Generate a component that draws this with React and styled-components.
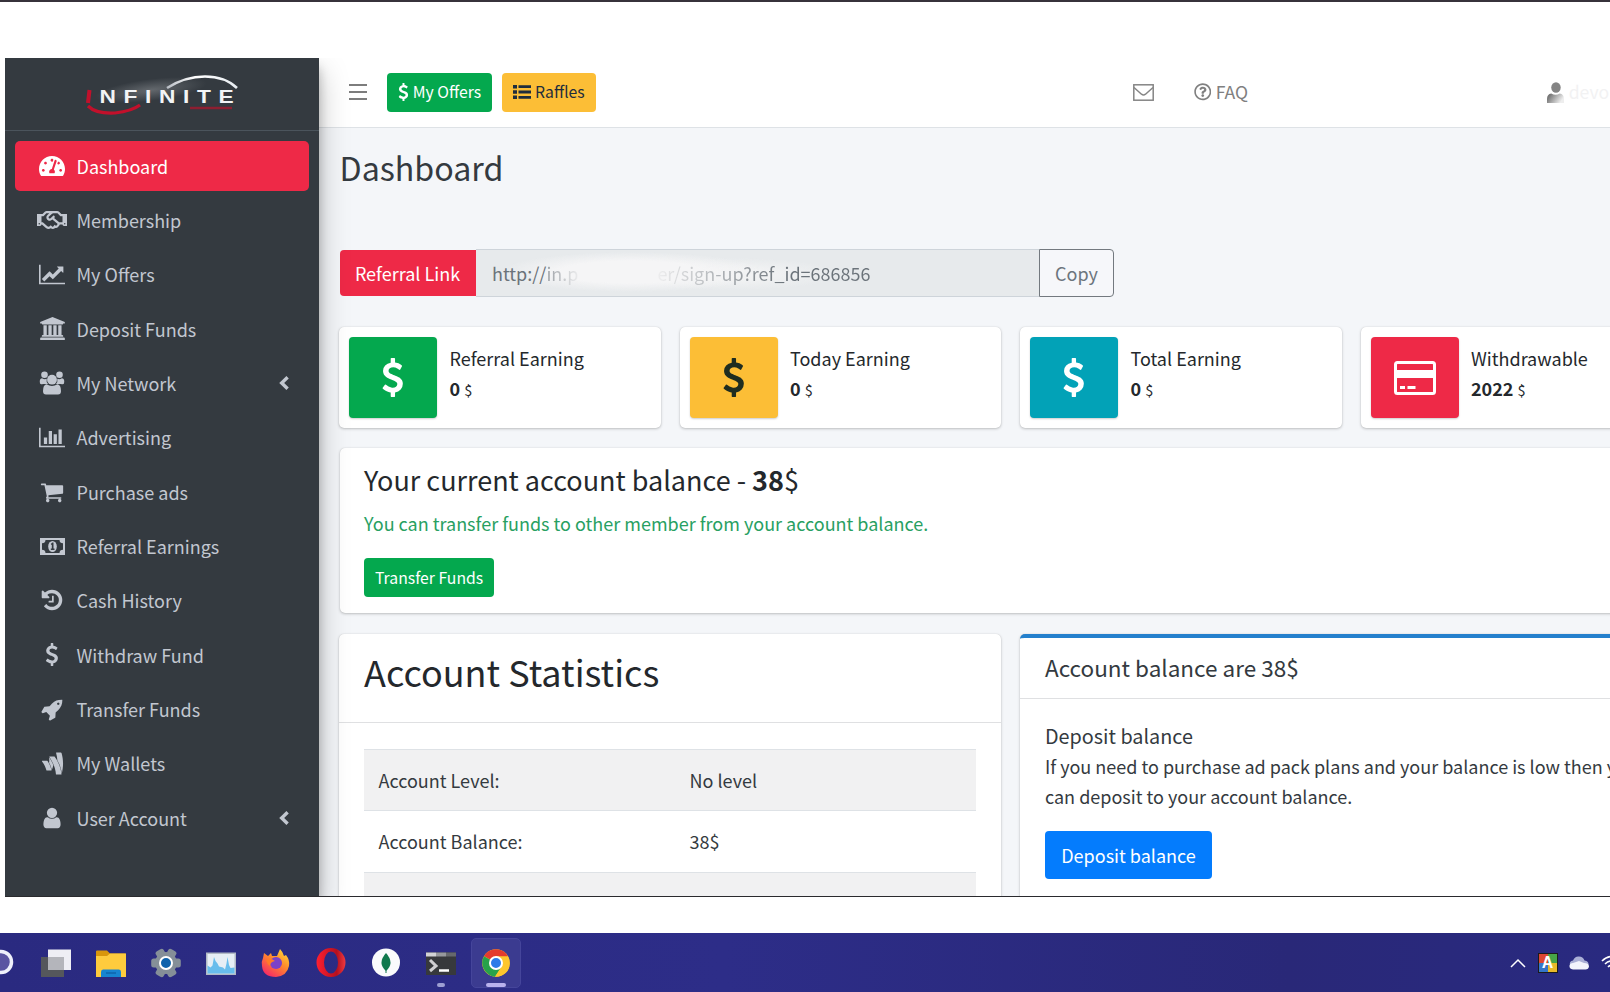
import React from "react";
import styled, { createGlobalStyle } from "styled-components";
import { FaRegHandshake, FaGoogleWallet, FaTachometerAlt, FaRegQuestionCircle } from "react-icons/fa";

const Global = createGlobalStyle`
  * { box-sizing: border-box; }
  html, body { margin: 0; padding: 0; }
  body {
    width: 1610px; height: 992px; overflow: hidden; background: #fff;
    font-family: "Noto Sans CJK SC", "Open Sans", sans-serif;
    font-size: 18px; line-height: 30px; color: #24282c;
  }
  h1, h2, h3, p { margin: 0; font-weight: 400; }
  button { font-family: inherit; margin: 0; }
  svg { display: block; flex: none; }
`;

const Screen = styled.div`
  display: flex; flex-direction: column; width: 1610px; height: 992px;
  border-top: 2px solid #37323b; overflow: hidden;
`;
const Browser = styled.div`
  display: flex; height: 839px; margin: 56px 0 0 5px; flex: none;
  border-bottom: 1.5px solid #2a2a2e; overflow: hidden;
`;

/* Sidebar */
const Sidebar = styled.aside`
  width: 314px; flex: none; background: #343a40; position: relative; z-index: 2;
  box-shadow: 0 14px 28px rgba(0,0,0,.25), 0 10px 10px rgba(0,0,0,.22);
`;
const Brand = styled.div`
  height: 72.5px; border-bottom: 1px solid #4b545c; display: flex; padding: 7px 0 0 70px;
`;
const Nav = styled.nav`
  display: flex; flex-direction: column; gap: 4.05px; padding: 10px;
`;
const NavItem = styled.a`
  display: flex; align-items: center; height: 50.3px; padding: 0 20px; border-radius: 5px;
  color: ${(p) => (p.$active ? "#fff" : "#c2c7d0")};
  background: ${(p) => (p.$active ? "#ee2947" : "transparent")};
`;
const NavIcon = styled.span`
  width: 34px; display: flex; justify-content: center; margin-right: 7.5px;
`;
const NavLabel = styled.span`flex: 1;`;

/* Main */
const Main = styled.div`
  flex: 1; min-width: 0; background: #f4f6f9; display: flex; flex-direction: column;
`;
const Topbar = styled.header`
  height: 70px; flex: none; background: #fff; border-bottom: 1px solid #dee2e6;
  display: flex; align-items: center; padding-left: 30px; padding-bottom: 1px; white-space: nowrap;
`;
const Burger = styled.span`
  width: 18px; height: 17px; margin-right: 20px; display: flex; flex-direction: column; justify-content: space-between;
  i { height: 2.4px; background: #7d7d7d; }
`;
const SmallButton = styled.button`
  display: flex; align-items: center; height: 39px; padding: 0 11px; gap: ${(p) => p.$gap || 0}px;
  border: 0; border-radius: 4px; font-size: 15.75px; line-height: 24px; white-space: nowrap;
  color: ${(p) => (p.$warning ? "#1f2d3d" : "#fff")};
  background: ${(p) => (p.$warning ? "#fcbe36" : "#04a84e")};
  & + & { margin-left: 10px; }
`;
const TopLink = styled.span`
  display: flex; align-items: center; gap: 4.5px; color: #808080; font-size: 17.6px;
  margin-left: ${(p) => p.$left}px;
`;
const FadedName = styled.span`color: #f2f2f3;`;
const Content = styled.main`padding: 19px 0 0 20.5px;`;
const PageTitle = styled.h1`
  font-size: 32.2px; line-height: 40px; color: #343a40; margin-bottom: 62px;
`;

const ReferralRow = styled.div`
  display: flex; height: 48px; width: 774.5px; margin-bottom: 30px;
`;
const ReferralTag = styled.div`
  width: 136px; margin: 1px 0; background: #ee2947; color: #fff; border-radius: 4px 0 0 4px;
  display: flex; align-items: center; justify-content: center; padding-bottom: 1px;
`;
const ReferralField = styled.div`
  flex: 1; display: flex; align-items: center; padding: 0 0 1px 16.5px; color: #6b737a;
  border: 1px solid #ced4da; border-width: 1px 0;
  background:
    radial-gradient(ellipse 130px 20px at 155px 22px, #f5f5f6 0 55%, transparent 100%),
    radial-gradient(ellipse 110px 16px at 255px 24px, #f1f2f3 0 35%, transparent 100%),
    #e7eaec;
`;
const Ghost = styled.span`
  width: ${(p) => p.$width}px; white-space: nowrap; color: transparent;
  background: linear-gradient(90deg, ${(p) => p.$from}, ${(p) => p.$to});
  background-clip: text; -webkit-background-clip: text;
`;
const CopyButton = styled.button`
  width: 75px; border: 1.5px solid #73797f; border-radius: 0 4px 4px 0; background: #f6f7fa;
  color: #6c757d; font-size: 18px; line-height: 30px; padding: 0 0 1px;
`;

const Cards = styled.div`
  display: grid; grid-template-columns: repeat(4, 321.5px); column-gap: 19px; margin: 0 0 20px -0.5px;
`;
const Card = styled.section`
  background: #fff; border-radius: 5px;
  box-shadow: 0 0 1px rgba(0,0,0,.16), 0 1px 3px rgba(0,0,0,.22);
`;
const InfoCard = styled(Card)`
  height: 101px; padding: 10px; display: flex; gap: 12.5px;
`;
const InfoIcon = styled.div`
  width: 88px; height: 81px; border-radius: 4px; background: ${(p) => p.$bg}; color: ${(p) => p.$fg || "#fff"};
  display: flex; align-items: center; justify-content: center; box-shadow: 0 1px 2px rgba(0,0,0,.2);
`;
const InfoText = styled.div`
  display: flex; flex-direction: column; padding-top: 6px; line-height: 30px;
  small { font-size: 14.5px; }
`;

const BalanceCard = styled(Card)`
  width: 1344px; height: 165px; padding: 15.5px 24.5px; margin-bottom: 20.5px;
`;
const BalanceTitle = styled.h2`font-size: 27px; line-height: 32px; margin-bottom: 12.5px;`;
const BalanceNote = styled.p`color: #28a062; margin-bottom: 20px;`;

const Columns = styled.div`
  display: grid; grid-template-columns: 662px 662px; column-gap: 19px; margin-left: -0.5px;
`;
const Panel = styled(Card)`
  height: 320px; border-top: ${(p) => (p.$accent ? "4px solid #2480cd" : "0")};
`;
const PanelHead = styled.div`
  height: ${(p) => p.$height}px; padding: ${(p) => p.$top}px 25px 0; border-bottom: 1px solid #dfe0e2;
`;
const StatsTitle = styled.h1`font-size: 36px; line-height: 44px;`;
const DepositHead = styled.h3`font-size: 22.5px; line-height: 28px; color: #343a40;`;
const PanelBody = styled.div`padding: ${(p) => p.$top || 25.5}px 25px 0; color: #343a40;`;
const StatRow = styled.div`
  display: grid; grid-template-columns: 303px 1fr; align-items: center; height: 61.6px; padding: 0 14.5px;
  border-top: 1px solid #dee2e6; background: ${(p) => (p.$striped ? "#f1f1f2" : "#fff")};
  span + span { padding-left: 8px; }
`;
const DepositTitle = styled.h3`font-size: 19.8px; line-height: 24px; margin-bottom: 2.5px;`;
const DepositText = styled.p`width: 592px; white-space: nowrap; margin-bottom: 20.5px;`;
const DepositButton = styled.button`
  height: 47.5px; width: 167px; border: 0; border-radius: 4px; background: #047cfd; color: #fff;
  font-size: 18px; line-height: 30px; padding: 0;
`;

/* Taskbar */
const Taskbar = styled.footer`
  margin-top: auto; height: 59px; flex: none; display: flex; align-items: stretch; overflow: hidden;
  background: linear-gradient(90deg, #2a2a80, #2d2d88 45%, #292878 80%, #292a80);
`;
const AppSlot = styled.div`
  width: 55.1px; flex: none; display: flex; flex-direction: column; align-items: center; position: relative;
  padding-top: 14.500px;
  &:first-child { margin-left: -27px; }
`;
const ActiveSlot = styled(AppSlot)`
  width: 50px; height: 50px; margin: 5px 2.5px 0; padding-top: 10px; border-radius: 5px;
  background: #3b3b90; border: 1px solid #45459b;
`;
const Running = styled.i`
  position: absolute; bottom: ${(p) => (p.$wide ? 0 : 5)}px; width: ${(p) => (p.$wide ? 20 : 8)}px; height: 4px; border-radius: 2px;
  background: ${(p) => (p.$wide ? "#b9b2ee" : "#9d9fd2")};
`;
const Tray = styled.div`
  margin-left: auto; display: flex; align-items: center; height: 60px; gap: 11.5px; width: 100px; flex: none;
`;
const LangBadge = styled.span`
  width: 20px; height: 20px; flex: none; border: 1px solid #1b1b1b; display: grid; place-items: center;
  background: conic-gradient(#47a447 0 25%, #e9b92a 0 50%, #3576c9 0 75%, #dd4631 0);
  color: #fff; font: 700 16px/18px "Liberation Sans", sans-serif;
`;

const Glyph = ({ w = 25, vb = "0 0 1792 1792", d, h }) => (
  <svg width={w} height={h || w} viewBox={vb} fill="currentColor"><path d={d} /></svg>
);
const DOLLAR = "M1362 1185q0 153-99.5 263.5t-258.5 136.5v175q0 14-9 23t-23 9h-135q-13 0-22.5-9.5t-9.5-22.5v-175q-66-9-127.5-31t-101.5-44.5-74-48-46.5-37.5-17.5-18q-17-21-2-41l103-135q7-10 23-12 15-2 24 9l2 2q113 99 243 125 37 8 74 8 81 0 142.5-43t61.5-122q0-28-15-53t-33.5-42-58.5-37.5-66-32-80-32.5q-39-16-61.5-25t-61.5-26.5-62.5-31-56.5-35.5-53.5-42.5-43.5-49-35.5-58-21-66.5-8.5-78q0-138 98-242t255-134v-180q0-13 9.5-22.5t22.5-9.5h135q14 0 23 9t9 23v176q57 6 110.5 23t87 33.5 63.5 37.5 39 29 15 14q17 18 5 38l-81 146q-8 15-23 16-14 3-27-7-3-3-14.5-12t-39-26.5-58.5-32-74.5-26-85.5-11.5q-95 0-155 43t-60 111q0 26 8.5 48t29.5 41.5 39.5 33 56 31 60.5 27 70 27.5q53 20 81 31.5t76 35 75.5 42.5 62 50 53 63.5 31.5 76.5 13 94z";
const Dollar = ({ h = 23 }) => <Glyph w={h * 0.6} h={h} vb="358 0 1076 1792" d={DOLLAR} />;
const LineChart = () => <Glyph w={26} h={23} vb="0 0 2048 1792" d="M2048 1536v128h-2048v-1536h128v1408h1920zm-128-1248v435q0 21-19.5 29.5t-35.5-7.5l-121-121-633 633q-10 10-23 10t-23-10l-233-233-416 416-192-192 585-585q10-10 23-10t23 10l233 233 464-464-121-121q-16-16-7.5-35.5t29.5-19.5h435q14 0 23 9t9 23z" />;
const BarChart = () => <Glyph w={26} h={23} vb="0 0 2048 1792" d="M640 896v512h-256v-512h256zm384-512v1024h-256v-1024h256zm1024 1152v128h-2048v-1536h128v1408h1920zm-640-896v768h-256v-768h256zm384-384v1152h-256v-1152h256z" />;
const Bank = () => <Glyph w={25} h={23} vb="0 0 1920 1792" d="M960 0l960 384v128h-128q0 26-20.5 45t-48.5 19h-1526q-28 0-48.5-19t-20.5-45h-128v-128zm-704 640h256v768h128v-768h256v768h128v-768h256v768h128v-768h256v768h59q28 0 48.5 19t20.5 45v64h-1664v-64q0-26 20.5-45t48.5-19h59v-768zm1595 960q28 0 48.5 19t20.5 45v128h-1920v-128q0-26 20.5-45t48.5-19h1782z" />;
const Cart = () => <Glyph w={24} h={24} d="M704 1536q0 52-38 90t-90 38-90-38-38-90 38-90 90-38 90 38 38 90zm896 0q0 52-38 90t-90 38-90-38-38-90 38-90 90-38 90 38 38 90zm128-1088v512q0 24-16.500 42.500t-40.500 21.500l-1044 122q13 60 13 70 0 16-24 64h920q26 0 45 19t19 45-19 45-45 19h-1024q-26 0-45-19t-19-45q0-11 8-31.500t16-36 21.500-40 15.500-29.500l-177-823h-204q-26 0-45-19t-19-45 19-45 45-19h256q16 0 28.500 6.500t19.500 15.500 13 24.500 8 26 5.500 29.500 4.500 26h1201q26 0 45 19t19 45z" />;
const Rocket = () => <Glyph w={23} h={23} d="M1440 448q0-40-28-68t-68-28-68 28-28 68 28 68 68 28 68-28 28-68zm224-288q0 249-75.500 430.500t-253.500 360.500q-81 80-195 176l-20 379q-2 16-16 26l-384 224q-7 4-16 4-12 0-23-9l-64-64q-13-14-8-32l85-276-281-281-276 85q-3 1-9 1-14 0-23-9l-64-64q-17-19-5-39l224-384q10-14 26-16l379-20q96-114 176-195 188-187 358-258t431-71q14 0 24 9.500t10 22.500z" />;
const USER = "M1536 1399q0 109-62.5 187t-150.5 78h-854q-88 0-150.5-78t-62.5-187q0-85 8.5-160.5t31.5-152 58.5-131 94-89 134.5-34.5q131 128 313 128t313-128q76 0 134.5 34.5t94 89 58.5 131 31.5 152 8.5 160.5zm-256-887q0 159-112.5 271.5t-271.5 112.5-271.5-112.5-112.5-271.5 112.5-271.5 271.5-112.5 271.5 112.5 112.5 271.5z";
const User = () => <Glyph w={24} h={24} d={USER} />;
const Users = () => (
  <svg width="26" height="24" viewBox="0 0 26 24" fill="currentColor">
    <circle cx="5.500" cy="3.700" r="3.300" /><circle cx="20.500" cy="3.700" r="3.300" />
    <path d="M1 12.500Q0 7.500 3 7.200q2.500 1.600 4.700.6Q7 11 9 13H4Q1.700 13.700 1 12.500zM25 12.500q1-5-2-5.300-2.500 1.600-4.700.6Q19 11 17 13h5q2.300.7 3-.5z" />
    <circle cx="13" cy="8.700" r="4.900" />
    <path d="M7.500 13.200q5.500 3.600 11 0Q22 14 22 20q0 3.500-3 3.500H7q-3 0-3-3.500 0-6 3.500-6.800z" />
  </svg>
);
const Chevron = () => (
  <svg width="10" height="14" viewBox="0 0 10 14" fill="none" stroke="currentColor" strokeWidth="3.400"><path d="M8.600 1.300L2.700 7l5.900 5.700" /></svg>
);
const History = () => <Glyph w={24} h={24} d="M1664 896q0 156-61 298t-164 245-245 164-298 61q-172 0-327-72.5t-264-204.5q-7-10-6.5-22.5t8.5-20.5l137-138q10-9 25-9 16 2 23 12 73 95 179 147t225 52q104 0 198.5-40.5t163.5-109.5 109.5-163.5 40.5-198.5-40.5-198.5-109.5-163.5-163.5-109.5-198.5-40.5q-98 0-188 35.5t-160 101.5l137 138q31 30 14 69-17 40-59 40h-448q-26 0-45-19t-19-45v-448q0-42 40-59 39-17 69 14l130 129q107-101 244.5-156.5t284.5-55.5q156 0 298 61t245 164 164 245 61 298zm-640-288v448q0 14-9 23t-23 9h-320q-14 0-23-9t-9-23v-64q0-14 9-23t23-9h224v-352q0-14 9-23t23-9h64q14 0 23 9t9 23z" />;
const Money = () => (
  <svg width="25" height="17" viewBox="0 0 25 17" fill="currentColor">
    <path fillRule="evenodd" d="M0 0h25v17H0zM5.5 2A3.5 3.5 0 0 1 2 5.3v6.4A3.5 3.5 0 0 1 5.5 15h14a3.5 3.5 0 0 1 3.5-3.3V5.3A3.5 3.5 0 0 1 19.500 2z" />
    <ellipse cx="12.500" cy="8.500" rx="4.300" ry="5.500" />
    <path d="M10.800 6l1.500-1.600h1.200v6h1v1.500h-3.700v-1.500h1V6.600l-.5.5z" fill="#343a40" />
  </svg>
);
const CreditCard = () => (
  <svg width="42" height="34" viewBox="0 0 42 34" fill="none" stroke="#fff">
    <rect x="1.500" y="1.500" width="39" height="31" rx="2" strokeWidth="3" />
    <path d="M2 13h38" strokeWidth="8" />
    <path d="M6 26.500h5M13.500 26.500h8" strokeWidth="3" />
  </svg>
);
const Envelope = () => (
  <svg width="21" height="17" viewBox="0 0 21 17" fill="none" stroke="#858585" strokeWidth="1.500">
    <rect x=".8" y=".8" width="19.400" height="15.400" />
    <path d="M1 3.500l7.500 6.700q2 1.600 4 0L20 3.500" />
  </svg>
);
const ListIcon = () => (
  <svg width="18" height="14" viewBox="0 0 18 14" fill="currentColor">
    <path d="M0 0h4v3.400H0zM0 5.300h4v3.400H0zM0 10.600h4V14H0zM5.500.3H18v2.800H5.500zM5.500 5.600H18v2.800H5.500zM5.500 10.900H18v2.800H5.500z" />
  </svg>
);
const ShadedUser = () => (
  <svg width="17" height="21" viewBox="0 0 18 21" preserveAspectRatio="none">
    <defs><linearGradient id="shade" x1="0" x2="1" y2=".4"><stop offset=".2" stopColor="#777" /><stop offset="1" stopColor="#eee" /></linearGradient></defs>
    <ellipse cx="9.500" cy="5.500" rx="5" ry="5.300" fill="#848484" />
    <path d="M0 21v-4q0-5 4.500-5.500 4.500 2.500 9 0Q18 12 18 17v4z" fill="url(#shade)" />
  </svg>
);
const Logo = () => (
  <svg width="170" height="55" viewBox="0 0 170 55">
    <defs>
      <linearGradient id="arc" x1="0" x2="1"><stop offset="0" stopColor="#b8bdc4" /><stop offset=".4" stopColor="#fff" /><stop offset="1" stopColor="#e8edf2" /></linearGradient>
      <radialGradient id="glow"><stop offset="0" stopColor="#8a8e92" stopOpacity=".55" /><stop offset="1" stopColor="#8a8e92" stopOpacity="0" /></radialGradient>
    </defs>
    <ellipse cx="76" cy="25" rx="56" ry="11" fill="url(#glow)" transform="rotate(-7 76 25)" />
    <path d="M92 23Q110 11.500 130 11.500q20 0 32 11.500" fill="none" stroke="url(#arc)" strokeWidth="2.600" />
    <path d="M14.500 25l-1.500 13" stroke="#c2102b" strokeWidth="4" />
    <path d="M13 41q8 8 27 7 17-2 25-8" fill="none" stroke="#c2102b" strokeWidth="3.200" />
    <path d="M115 43h42" stroke="#8d1f31" strokeWidth="2.400" />
    <text transform="translate(24.500 38) scale(1.230 1)" textLength="109" fontFamily="Liberation Sans, sans-serif" fontWeight="700" fontSize="18.500" fill="#f2f4f6">NFINITE</text>
  </svg>
);

/* Taskbar icons */
const Search = () => <svg width="30" height="30"><circle cx="15" cy="14" r="10.500" fill="#5a55a2" stroke="#eef0fb" strokeWidth="3.500" /></svg>;
const TaskView = () => (
  <svg width="30" height="30"><rect y="9" width="23" height="20" fill="#55575c" /><rect x="7" y="1.500" width="23" height="20.500" fill="#eeeef4" /><path d="M7 9h16v13H7z" fill="#b4b5bb" /></svg>
);
const Folder = () => (
  <svg width="30" height="30"><path d="M0 3.500q0-1 1-1h10l3 3h15q1 0 1 1v5H0z" fill="#d9960b" /><path d="M0 8h11l3-2.500h16V29H0z" fill="#fecb3d" /><path d="M5 29v-5q0-2.500 2-2.500h16q2 0 2 2.500v5z" fill="#1784d1" /><path d="M10 25h10" stroke="#0b5598" /></svg>
);
const Gear = () => (
  <svg width="30" height="30" viewBox="0 0 30 30">
    <g fill="#858f98"><circle cx="15" cy="15" r="11" />
      {[0, 60, 120].map((a) => <rect key={a} x="10.500" y="0.200" width="9" height="29.600" rx="2.500" transform={`rotate(${a + 30} 15 15)`} />)}
    </g>
    <circle cx="15" cy="15" r="6" fill="#0e62ac" stroke="#fff" strokeWidth="2" />
  </svg>
);
const Monitor = () => (
  <svg width="30" height="30"><path d="M0 4.500h30V27H0z" fill="#b2bac5" /><path d="M1.500 6h27v19.500h-27z" fill="#e6eef5" /><path d="M1.500 25.500v-8l3 2 2-2L8 9l1.500 4 2 2.500 1.500 3 4 1 2 2 1.500-6L21.500 9l1.500 8 1.500 3 4-.5v6z" fill="#68bdec" /></svg>
);
const Firefox = () => (
  <svg width="30" height="30" viewBox="0 0 30 30">
    <defs><linearGradient id="ff" x1=".9" y1="0" x2=".2" y2="1"><stop offset="0" stopColor="#ffe03a" /><stop offset=".45" stopColor="#ff8a2b" /><stop offset="1" stopColor="#f4236a" /></linearGradient></defs>
    <path d="M2 10l1-5 4 3 3-3 1 3 5 0 3-7q3 3 4 7l2-1q4 5 3 11-2 10-13 11Q2 29 1 18q-1-4 1-8z" fill="url(#ff)" />
    <circle cx="15" cy="15" r="6" fill="#7b42c8" /><path d="M5 12q4-3 9 1-5 1-5 5-3-2-4-6z" fill="#ff7b27" />
  </svg>
);
const Opera = () => <svg width="30" height="30"><defs><linearGradient id="op"><stop offset="0" stopColor="#ff1f30" /><stop offset=".7" stopColor="#b3101f" /><stop offset="1" stopColor="#f03a40" /></linearGradient></defs><path fillRule="evenodd" d="M15 0a14.500 14.500 0 1 0 0 29a14.500 14.500 0 1 0 0-29zM15 3.500a7 11 0 1 1 0 22a7 11 0 1 1 0-22z" fill="url(#op)" /></svg>;
const Leaf = () => <svg width="30" height="30"><circle cx="15" cy="14.500" r="14" fill="#fafbfc" /><path d="M15 5q9 10 0 18-9-8 0-18z" fill="#10794d" /><path d="M15 20v5" stroke="#10794d" /></svg>;
const Terminal = () => (
  <svg width="30" height="30"><path d="M0 4.500h30V27H0z" fill="#37393c" /><path d="M0 4.500h10v4H0z" fill="#d2d3d5" /><path d="M10 4.500h10v4H10z" fill="#96989c" /><path d="M20 4.500h10v4H20z" fill="#66686d" /><path d="M4 12l6 6-6 5" fill="none" stroke="#d0d0d2" strokeWidth="3" /><path d="M13 22.500h10" stroke="#fff" strokeWidth="2.500" /></svg>
);
const Chrome = () => (
  <svg width="28" height="28" viewBox="0 0 28 28">
    <circle cx="14" cy="14" r="13.800" fill="#fdc62c" />
    <path d="M14 14L2 7Q6 .2 14 .2q8 0 12 7z" fill="#e33b2e" />
    <path d="M14 14L2 7.200Q-2 15 3 22q4 5 10 5.800L20 17z" fill="#27a24b" />
    <path d="M14 14V7.200h12q2 4 1.600 8-.4 8-7.600 11-3 1.500-7 1.600L20 17z" fill="#fdc62c" />
    <circle cx="14" cy="14" r="6" fill="#2c7be9" stroke="#fff" strokeWidth="2" />
  </svg>
);

const NAV = [
  ["Dashboard", <FaTachometerAlt size={26} />], ["Membership", <FaRegHandshake size={30} />],
  ["My Offers", <LineChart />], ["Deposit Funds", <Bank />], ["My Network", <Users />, true],
  ["Advertising", <BarChart />], ["Purchase ads", <Cart />], ["Referral Earnings", <Money />],
  ["Cash History", <History />], ["Withdraw Fund", <Dollar />], ["Transfer Funds", <Rocket />],
  ["My Wallets", <FaGoogleWallet size={25} />], ["User Account", <User />, true],
];
const STATS = [
  ["Referral Earning", "0", "#04a84e", "#fff", <Dollar h={39} />],
  ["Today Earning", "0", "#fcbe36", "#1f2d20", <Dollar h={39} />],
  ["Total Earning", "0", "#02a2b7", "#fff", <Dollar h={39} />],
  ["Withdrawable", "2022", "#ee2947", "#fff", <CreditCard />],
];

export default function App() {
  return (
    <Screen>
      <Global />
      <Browser>
        <Sidebar>
          <Brand><Logo /></Brand>
          <Nav>
            {NAV.map(([label, icon, more], i) => (
              <NavItem key={label} $active={i === 0}>
                <NavIcon>{icon}</NavIcon>
                <NavLabel>{label}</NavLabel>
                {more && <Chevron />}
              </NavItem>
            ))}
          </Nav>
        </Sidebar>
        <Main>
          <Topbar>
            <Burger><i /><i /><i /></Burger>
            <SmallButton $gap={4}><Dollar h={18} />My Offers</SmallButton>
            <SmallButton $warning $gap={4}><ListIcon />Raffles</SmallButton>
            <TopLink $left={537.5}><Envelope /></TopLink>
            <TopLink $left={39.5}><FaRegQuestionCircle size={17.5} />FAQ</TopLink>
            <TopLink $left={299}><ShadedUser /><FadedName>devo</FadedName></TopLink>
          </Topbar>
          <Content>
            <PageTitle>Dashboard</PageTitle>
            <ReferralRow>
              <ReferralTag>Referral Link</ReferralTag>
              <ReferralField>
                <span>http://</span>
                <Ghost $width={111} $from="#9a9fa4" $to="#f3f3f4 32%">in.p</Ghost>
                <Ghost $width={215} $from="#eeeeef" $to="#6b737a 60%">er/sign-up?ref_id=686856</Ghost>
              </ReferralField>
              <CopyButton>Copy</CopyButton>
            </ReferralRow>
            <Cards>
              {STATS.map(([label, value, bg, fg, icon]) => (
                <InfoCard key={label}>
                  <InfoIcon $bg={bg} $fg={fg}>{icon}</InfoIcon>
                  <InfoText><span>{label}</span><span><b>{value}</b> <small>$</small></span></InfoText>
                </InfoCard>
              ))}
            </Cards>
            <BalanceCard>
              <BalanceTitle>Your current account balance - <b>38</b>$</BalanceTitle>
              <BalanceNote>You can transfer funds to other member from your account balance.</BalanceNote>
              <SmallButton>Transfer Funds</SmallButton>
            </BalanceCard>
            <Columns>
              <Panel>
                <PanelHead $height={89.5} $top={15.5}><StatsTitle>Account Statistics</StatsTitle></PanelHead>
                <PanelBody>
                  <StatRow $striped><span>Account Level:</span><span>No level</span></StatRow>
                  <StatRow><span>Account Balance:</span><span>38$</span></StatRow>
                  <StatRow $striped />
                </PanelBody>
              </Panel>
              <Panel $accent>
                <PanelHead $height={61.5} $top={15.5}><DepositHead>Account balance are 38$</DepositHead></PanelHead>
                <PanelBody $top={25.2}>
                  <DepositTitle>Deposit balance</DepositTitle>
                  <DepositText>If you need to purchase ad pack plans and your balance is low then you<br />can deposit to your account balance.</DepositText>
                  <DepositButton>Deposit balance</DepositButton>
                </PanelBody>
              </Panel>
            </Columns>
          </Content>
        </Main>
      </Browser>
      <Taskbar>
        <AppSlot><Search /></AppSlot>
        <AppSlot><TaskView /></AppSlot>
        <AppSlot><Folder /></AppSlot>
        <AppSlot><Gear /></AppSlot>
        <AppSlot><Monitor /></AppSlot>
        <AppSlot><Firefox /></AppSlot>
        <AppSlot><Opera /></AppSlot>
        <AppSlot><Leaf /></AppSlot>
        <AppSlot><Terminal /><Running /></AppSlot>
        <ActiveSlot><Chrome /><Running $wide /></ActiveSlot>
        <Tray>
          <svg width="16" height="10"><path d="M1 9l7-7 7 7" fill="none" stroke="#fff" strokeWidth="1.500" /></svg>
          <LangBadge>A</LangBadge>
          <svg width="20" height="14" viewBox="0 0 20 14"><path d="M1 9Q0 5 4 4.500 6 0 10 .5q4 0 5.500 4Q20 5 19.500 9z" fill="#aab0d6" /><path d="M4 13.500q-4-.5-3.500-4Q1 7 4 7l6-2 5 2q5 0 5 3.500-.5 3-3.500 3z" fill="#f2f4fc" /></svg>
          <svg width="20" height="16" viewBox="0 0 20 16" fill="none" stroke="#fff" strokeWidth="1.600"><path d="M1 6q9-9 18 0M4 9q6-6 12 0M7 12q3-3 6 0" /></svg>
        </Tray>
      </Taskbar>
    </Screen>
  );
}
